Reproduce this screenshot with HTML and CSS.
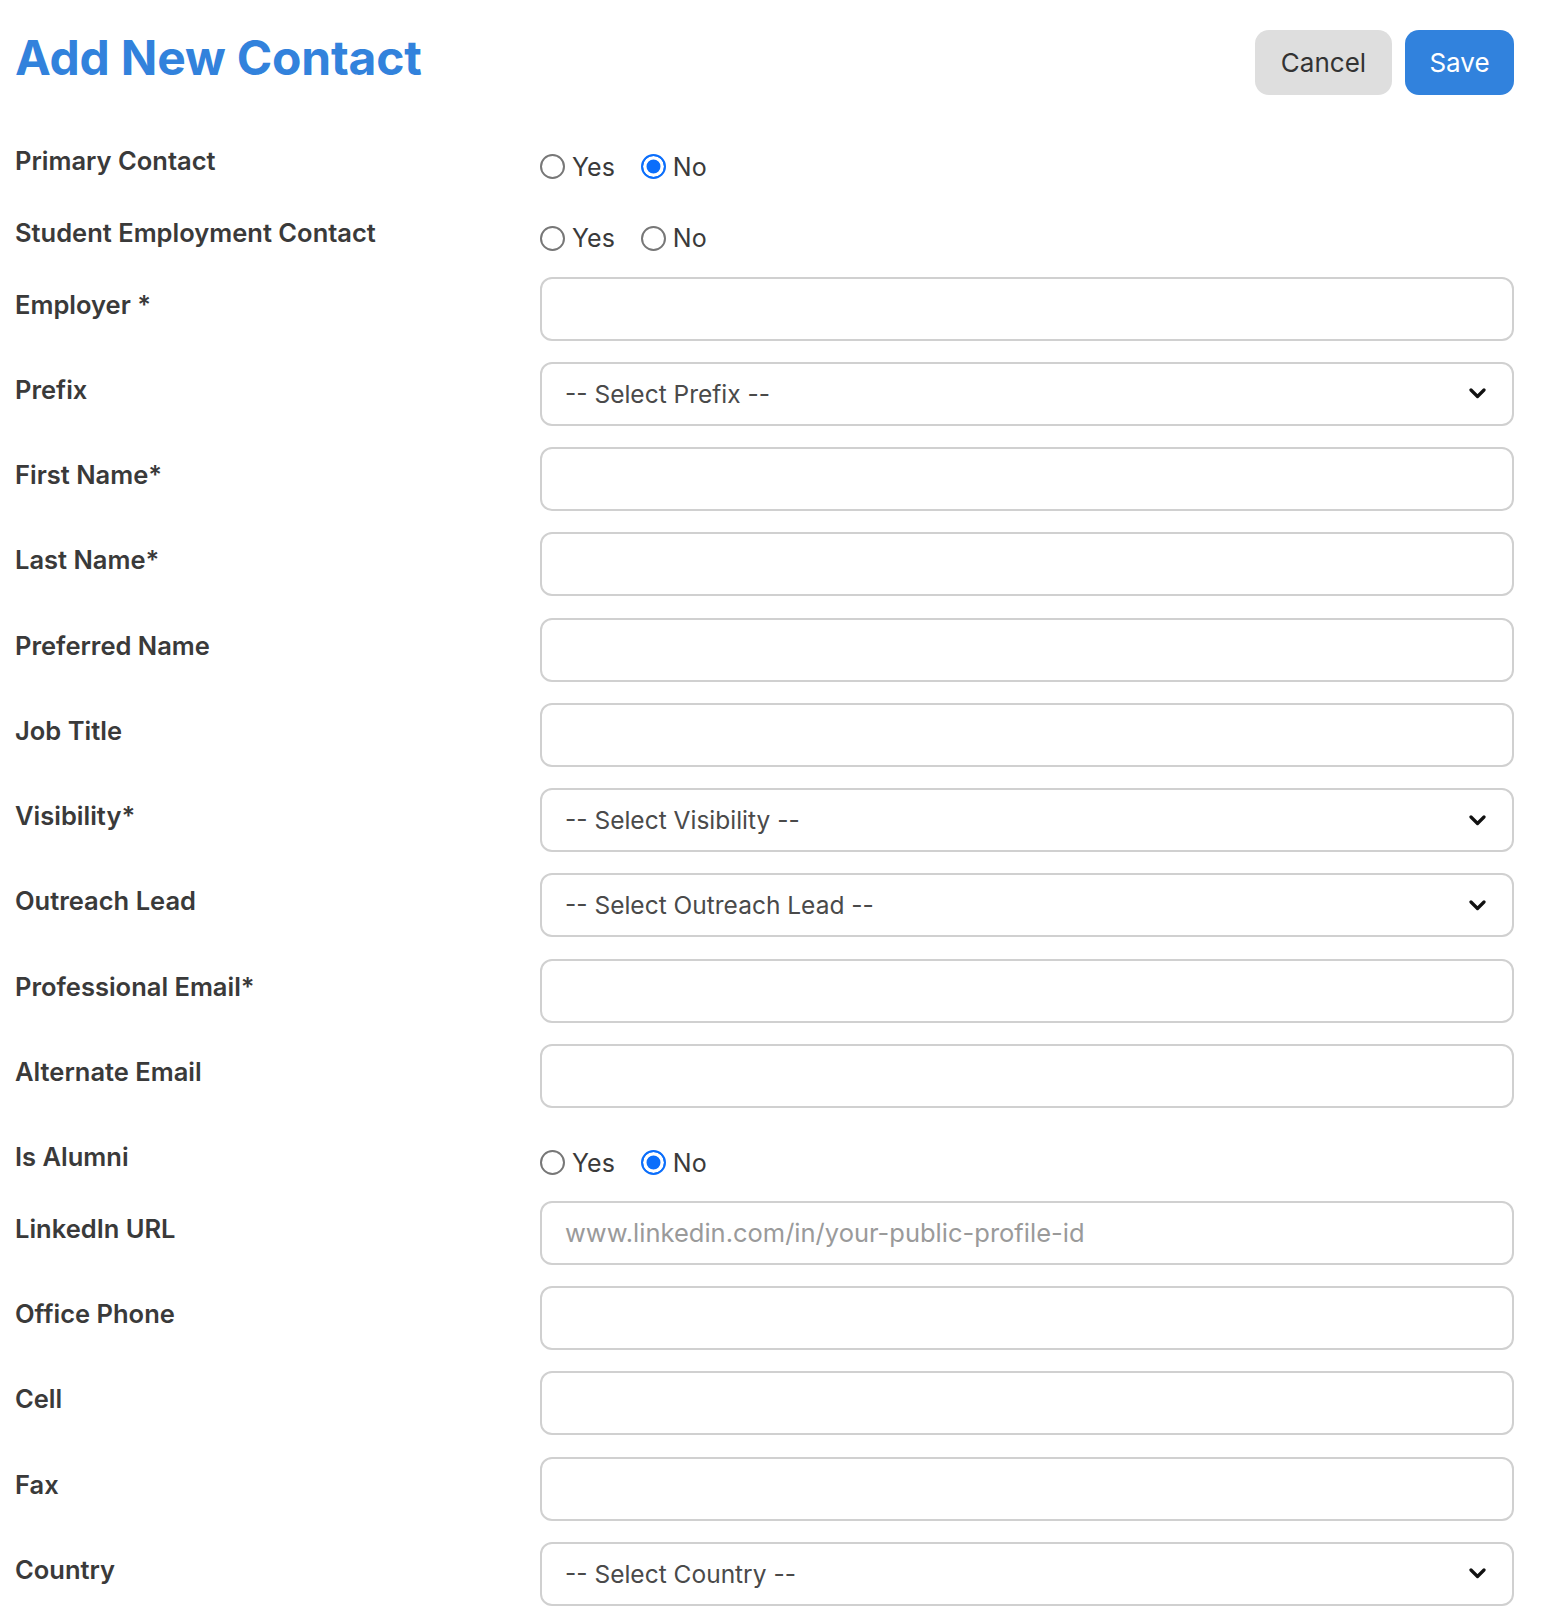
FILE: index.html
```html
<!DOCTYPE html>
<html lang="en">
<head>
<meta charset="utf-8">
<title>Add New Contact</title>
<link rel="stylesheet" href="styles.css">
</head>
<body>
<div class="page">
  <header class="header">
    <h1 class="title">Add New Contact</h1>
    <div class="actions">
      <button class="btn btn-cancel" type="button">Cancel</button>
      <button class="btn btn-save" type="button">Save</button>
    </div>
  </header>

  <form class="form">
    <div class="row row-radio">
      <div class="label">Primary Contact</div>
      <div class="control radios">
        <label class="opt"><span class="radio"></span>Yes</label>
        <label class="opt"><span class="radio checked"></span>No</label>
      </div>
    </div>
    <div class="row row-radio">
      <div class="label">Student Employment Contact</div>
      <div class="control radios">
        <label class="opt"><span class="radio"></span>Yes</label>
        <label class="opt"><span class="radio"></span>No</label>
      </div>
    </div>
    <div class="row">
      <div class="label">Employer *</div>
      <div class="control"><input class="field" type="text"></div>
    </div>
    <div class="row">
      <div class="label">Prefix</div>
      <div class="control"><div class="field select"><span>-- Select Prefix --</span><svg class="chev" width="17" height="11" viewBox="0 0 17 11"><polyline points="2,2 8.5,8.5 15,2" fill="none" stroke="#111" stroke-width="3.2" stroke-linecap="round" stroke-linejoin="round"/></svg></div></div>
    </div>
    <div class="row">
      <div class="label">First Name*</div>
      <div class="control"><input class="field" type="text"></div>
    </div>
    <div class="row">
      <div class="label">Last Name*</div>
      <div class="control"><input class="field" type="text"></div>
    </div>
    <div class="row">
      <div class="label">Preferred Name</div>
      <div class="control"><input class="field" type="text"></div>
    </div>
    <div class="row">
      <div class="label">Job Title</div>
      <div class="control"><input class="field" type="text"></div>
    </div>
    <div class="row">
      <div class="label">Visibility*</div>
      <div class="control"><div class="field select"><span>-- Select Visibility --</span><svg class="chev" width="17" height="11" viewBox="0 0 17 11"><polyline points="2,2 8.5,8.5 15,2" fill="none" stroke="#111" stroke-width="3.2" stroke-linecap="round" stroke-linejoin="round"/></svg></div></div>
    </div>
    <div class="row">
      <div class="label">Outreach Lead</div>
      <div class="control"><div class="field select"><span>-- Select Outreach Lead --</span><svg class="chev" width="17" height="11" viewBox="0 0 17 11"><polyline points="2,2 8.5,8.5 15,2" fill="none" stroke="#111" stroke-width="3.2" stroke-linecap="round" stroke-linejoin="round"/></svg></div></div>
    </div>
    <div class="row">
      <div class="label">Professional Email*</div>
      <div class="control"><input class="field" type="text"></div>
    </div>
    <div class="row">
      <div class="label">Alternate Email</div>
      <div class="control"><input class="field" type="text"></div>
    </div>
    <div class="row row-radio">
      <div class="label">Is Alumni</div>
      <div class="control radios">
        <label class="opt"><span class="radio"></span>Yes</label>
        <label class="opt"><span class="radio checked"></span>No</label>
      </div>
    </div>
    <div class="row">
      <div class="label">LinkedIn URL</div>
      <div class="control"><input class="field" type="text" placeholder="www.linkedin.com/in/your-public-profile-id"></div>
    </div>
    <div class="row">
      <div class="label">Office Phone</div>
      <div class="control"><input class="field" type="text"></div>
    </div>
    <div class="row">
      <div class="label">Cell</div>
      <div class="control"><input class="field" type="text"></div>
    </div>
    <div class="row">
      <div class="label">Fax</div>
      <div class="control"><input class="field" type="text"></div>
    </div>
    <div class="row">
      <div class="label">Country</div>
      <div class="control"><div class="field select"><span>-- Select Country --</span><svg class="chev" width="17" height="11" viewBox="0 0 17 11"><polyline points="2,2 8.5,8.5 15,2" fill="none" stroke="#111" stroke-width="3.2" stroke-linecap="round" stroke-linejoin="round"/></svg></div></div>
    </div>
  </form>
</div>
</body>
</html>
```
FILE: styles.css
```css
* { box-sizing: border-box; }
html, body { margin: 0; padding: 0; background: #fff; }
body {
  font-family: Inter, "Noto Sans", "Liberation Sans", sans-serif;
  color: #3d3d3d;
}
.page {
  padding: 30px 32px 0 15px;
}
.header {
  display: flex;
  justify-content: space-between;
  align-items: center;
  height: 65px;
}
.title {
  margin: 0 0 9px 0;
  font-size: 48px;
  font-weight: 700;
  color: #3282dc;
  letter-spacing: -0.2px;
  line-height: 1;
}
.actions {
  display: flex;
  gap: 13px;
}
.btn {
  height: 65px;
  border: none;
  border-radius: 14px;
  font-family: inherit;
  font-size: 26px;
  font-weight: 400;
  cursor: pointer;
}
.btn-cancel { width: 137px; background: #dedede; color: #333; }
.btn-save { width: 109px; background: #3182dd; color: #fff; }

.form {
  margin-top: 38px;
}
.row {
  display: flex;
  margin-bottom: 21.25px;
}
.row-radio { height: 50.5px; }
.label {
  width: 525px;
  flex: none;
  padding-top: 13px;
  font-size: 25.5px;
  line-height: 30px;
  font-weight: 600;
  color: #3a3a3a;
}
.control {
  width: 974px;
  flex: none;
}
.radios {
  display: flex;
  align-items: center;
  gap: 26px;
  padding-top: 21px;
  height: 46px;
}
.opt {
  display: flex;
  align-items: center;
  font-size: 25px;
  color: #3a3a3a;
}
.radio {
  width: 25px;
  height: 25px;
  border-radius: 50%;
  border: 2px solid #777;
  margin-right: 7px;
  background: #fff;
}
.radio.checked {
  border-color: #0b6efb;
  background: #0b6efb;
  box-shadow: inset 0 0 0 3.5px #fff;
}
.field {
  display: block;
  width: 100%;
  height: 64px;
  border: 2px solid #d0d0d0;
  border-radius: 12px;
  background: #fff;
  padding: 0 23px;
  font-family: inherit;
  font-size: 25.5px;
  color: #4a4a4a;
  outline: none;
}
.field::placeholder { color: #9a9a9a; }
.select {
  display: flex;
  align-items: center;
  justify-content: space-between;
  padding-right: 26px;
  font-size: 24.5px;
}
.chev { flex: none; }
```
